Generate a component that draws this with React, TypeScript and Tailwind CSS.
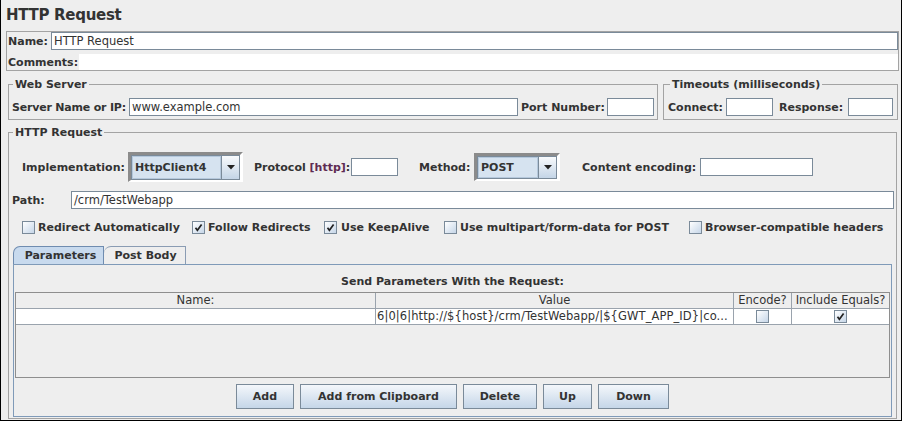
import React from "react";

function TextField({ className = "", value = "" }: { className?: string; value?: string }) {
  return (
    <div
      className={
        "h-[18px] border border-[#7a8a99] bg-white flex items-center pl-[2px] text-[11.5px] leading-[16px] font-normal whitespace-nowrap overflow-hidden " +
        className
      }
    >
      {value}
    </div>
  );
}

function Check({ checked = false }: { checked?: boolean }) {
  return (
    <div className="w-[13px] h-[13px] shrink-0 border border-[#7a8a99] bg-linear-to-br from-white to-[#c6d6e8] flex items-center justify-center">
      {checked && (
        <svg width="9" height="9" viewBox="0 0 9 9">
          <path d="M1.5 4.8 L3.4 7.3 L7.6 1.6" stroke="#222" strokeWidth="1.7" fill="none" />
        </svg>
      )}
    </div>
  );
}

function Combo({ value, className = "" }: { value: string; className?: string }) {
  return (
    <div
      className={
        "flex border-t-[3px] border-l-[3px] border-r-[3px] border-b-[2px] border-t-[#8b8b8b] border-l-[#8b8b8b] border-r-white border-b-white " +
        className
      }
    >
      <div className="flex-1 flex border border-[#7a8a99]">
        <div className="flex-1 bg-[#d6e3f0] border border-[#b5c8dc] flex items-center pl-[2px] font-bold">
          {value}
        </div>
        <div className="w-[18px] border-l border-[#7a8a99] bg-linear-to-b from-[#f8fafc] to-[#c4d5e7] flex items-center justify-center">
          <svg width="8" height="5" viewBox="0 0 8 5">
            <path d="M0 0H8L4 4.5Z" fill="#222" />
          </svg>
        </div>
      </div>
    </div>
  );
}

function Btn({ label, className = "" }: { label: string; className?: string }) {
  return (
    <div
      className={
        "h-[25px] border border-[#7a8a99] bg-linear-to-b from-[#f4f7fb] to-[#c5d6e8] flex items-center justify-center font-bold " +
        className
      }
    >
      {label}
    </div>
  );
}

export default function App() {
  return (
    <div className="w-[902px] h-[421px] bg-[#eeeeee] border-l border-r border-b border-black flex flex-col pl-[5px] pr-[2px] overflow-hidden font-['DejaVu_Sans',sans-serif] text-[#333333] text-[11px] leading-[13px]">
      {/* Title */}
      <div className="pt-[5px] h-[25px] text-[15px] leading-[20px] font-bold tracking-[-0.3px]">HTTP Request</div>

      {/* Name / Comments */}
      <div className="mt-[6px] border border-[#a3a3a3] flex flex-col">
        <div className="h-[18px] flex items-center pl-[1px]">
          <span className="w-[43px] font-bold">Name:</span>
          <TextField className="flex-1" value="HTTP Request" />
        </div>
        <div className="mt-[4px] h-[16px] flex items-center pl-[1px]">
          <span className="w-[71px] font-bold">Comments:</span>
          <div className="flex-1 h-[16px] bg-white" />
        </div>
      </div>

      {/* Web Server + Timeouts */}
      <div className="mt-[7px] ml-[2px] mr-[1px] flex gap-[5px]">
        <fieldset className="w-[650px] border border-[#a3a3a3]">
          <legend className="ml-[4px] px-[2px] font-bold leading-[13px]">Web Server</legend>
          <div className="pt-[7px] pb-[3px] pl-[3px] pr-[3px]">
            <div className="h-[18px] flex items-center">
              <span className="w-[117px] font-bold tracking-[-0.2px]">Server Name or IP:</span>
              <TextField className="flex-1" value="www.example.com" />
              <span className="w-[89px] pl-[3px] font-bold">Port Number:</span>
              <TextField className="w-[47px]" />
            </div>
          </div>
        </fieldset>
        <fieldset className="flex-1 border border-[#a3a3a3]">
          <legend className="ml-[6px] px-[2px] font-bold leading-[13px]">Timeouts (milliseconds)</legend>
          <div className="pt-[7px] pb-[3px] pl-[4px] pr-[4px]">
            <div className="h-[18px] flex items-center">
              <span className="w-[58px] font-bold">Connect:</span>
              <TextField className="w-[47px]" />
              <span className="w-[75px] pl-[6px] font-bold">Response:</span>
              <TextField className="w-[45px]" />
            </div>
          </div>
        </fieldset>
      </div>

      {/* HTTP Request */}
      <fieldset className="mt-[6px] ml-[2px] mr-[2px] mb-[1px] flex-1 min-h-0 border border-[#a3a3a3] flex flex-col">
        <legend className="ml-[4px] px-[2px] font-bold leading-[13px]">HTTP Request</legend>
        <div className="flex-1 min-h-0 flex flex-col pt-[13px] pb-[1px]">
          {/* Implementation row */}
          <div className="h-[30px] flex items-center pl-[13px]">
            <span className="w-[106px] font-bold">Implementation:</span>
            <Combo value="HttpClient4" className="w-[115px] h-[30px]" />
            <span className="ml-[11px] w-[97px] font-bold">
              Protocol <span className="text-[#5e2b52]">[http]</span>:
            </span>
            <TextField className="w-[47px]" />
            <span className="ml-[21px] w-[55px] font-bold">Method:</span>
            <Combo value="POST" className="w-[86px] h-[28px]" />
            <span className="ml-[22px] w-[118px] font-bold">Content encoding:</span>
            <TextField className="w-[113px]" />
          </div>

          {/* Path row */}
          <div className="mt-[9px] h-[18px] flex items-center pl-[3px] pr-[2px]">
            <span className="w-[59px] font-bold">Path:</span>
            <TextField className="flex-1" value="/crm/TestWebapp" />
          </div>

          {/* Checkbox row */}
          <div className="mt-[10px] h-[16px] flex items-center pl-[13px] font-bold">
            <div className="w-[170px] flex items-center gap-[3px]">
              <Check />
              <span>Redirect Automatically</span>
            </div>
            <div className="w-[132px] flex items-center gap-[3px]">
              <Check checked />
              <span>Follow Redirects</span>
            </div>
            <div className="w-[120px] flex items-center gap-[4px]">
              <Check checked />
              <span>Use KeepAlive</span>
            </div>
            <div className="w-[245px] flex items-center gap-[3px]">
              <Check />
              <span>Use multipart/form-data for POST</span>
            </div>
            <div className="flex items-center gap-[3px]">
              <Check />
              <span>Browser-compatible headers</span>
            </div>
          </div>

          {/* Tabs */}
          <div className="mt-[11px] ml-[4px] flex h-[18px] font-bold">
            <div className="w-[91px] h-[18px] bg-[#c8daee] border-t border-l border-r border-[#6f8cb0] rounded-tl-[7px] flex items-center justify-center pl-[4px]">
              Parameters
            </div>
            <div className="w-[82px] h-[18px] border-t border-r border-[#8a9cb3] rounded-tl-[7px] flex items-center justify-center pl-[2px]">
              Post Body
            </div>
          </div>

          {/* Tab panel */}
          <div className="flex-1 min-h-0 ml-[4px] mr-[4px] border border-[#7f9ab8] flex flex-col px-[1px] pt-[10px] pb-[7px]">
            <div className="h-[13px] text-center font-bold">Send Parameters With the Request:</div>
            <div className="mt-[4px] flex-1 min-h-0 border border-[#8e8e8e] bg-[#eeeeee] flex flex-col text-[11.5px]">
              <div className="h-[16px] flex border-b border-[#9aa3ad] text-center leading-[15px]">
                <div className="w-[360px] border-r border-[#9aa3ad]">Name:</div>
                <div className="w-[358px] border-r border-[#9aa3ad]">Value</div>
                <div className="w-[58px] border-r border-[#9aa3ad]">Encode?</div>
                <div className="flex-1">Include Equals?</div>
              </div>
              <div className="h-[16px] flex bg-white border-b border-[#9aa3ad]">
                <div className="w-[360px] border-r border-[#9aa3ad]" />
                <div className="w-[358px] border-r border-[#9aa3ad] pl-[1px] whitespace-nowrap overflow-hidden leading-[15px] tracking-[0.1px]">
                  {"6|0|6|http://${host}/crm/TestWebapp/|${GWT_APP_ID}|co..."}
                </div>
                <div className="w-[58px] border-r border-[#9aa3ad] flex items-center justify-center">
                  <Check />
                </div>
                <div className="flex-1 flex items-center justify-center">
                  <Check checked />
                </div>
              </div>
            </div>
            <div className="mt-[6px] flex justify-center gap-[6px]">
              <Btn label="Add" className="w-[58px]" />
              <Btn label="Add from Clipboard" className="w-[157px]" />
              <Btn label="Delete" className="w-[74px]" />
              <Btn label="Up" className="w-[49px]" />
              <Btn label="Down" className="w-[71px]" />
            </div>
          </div>
        </div>
      </fieldset>
    </div>
  );
}
